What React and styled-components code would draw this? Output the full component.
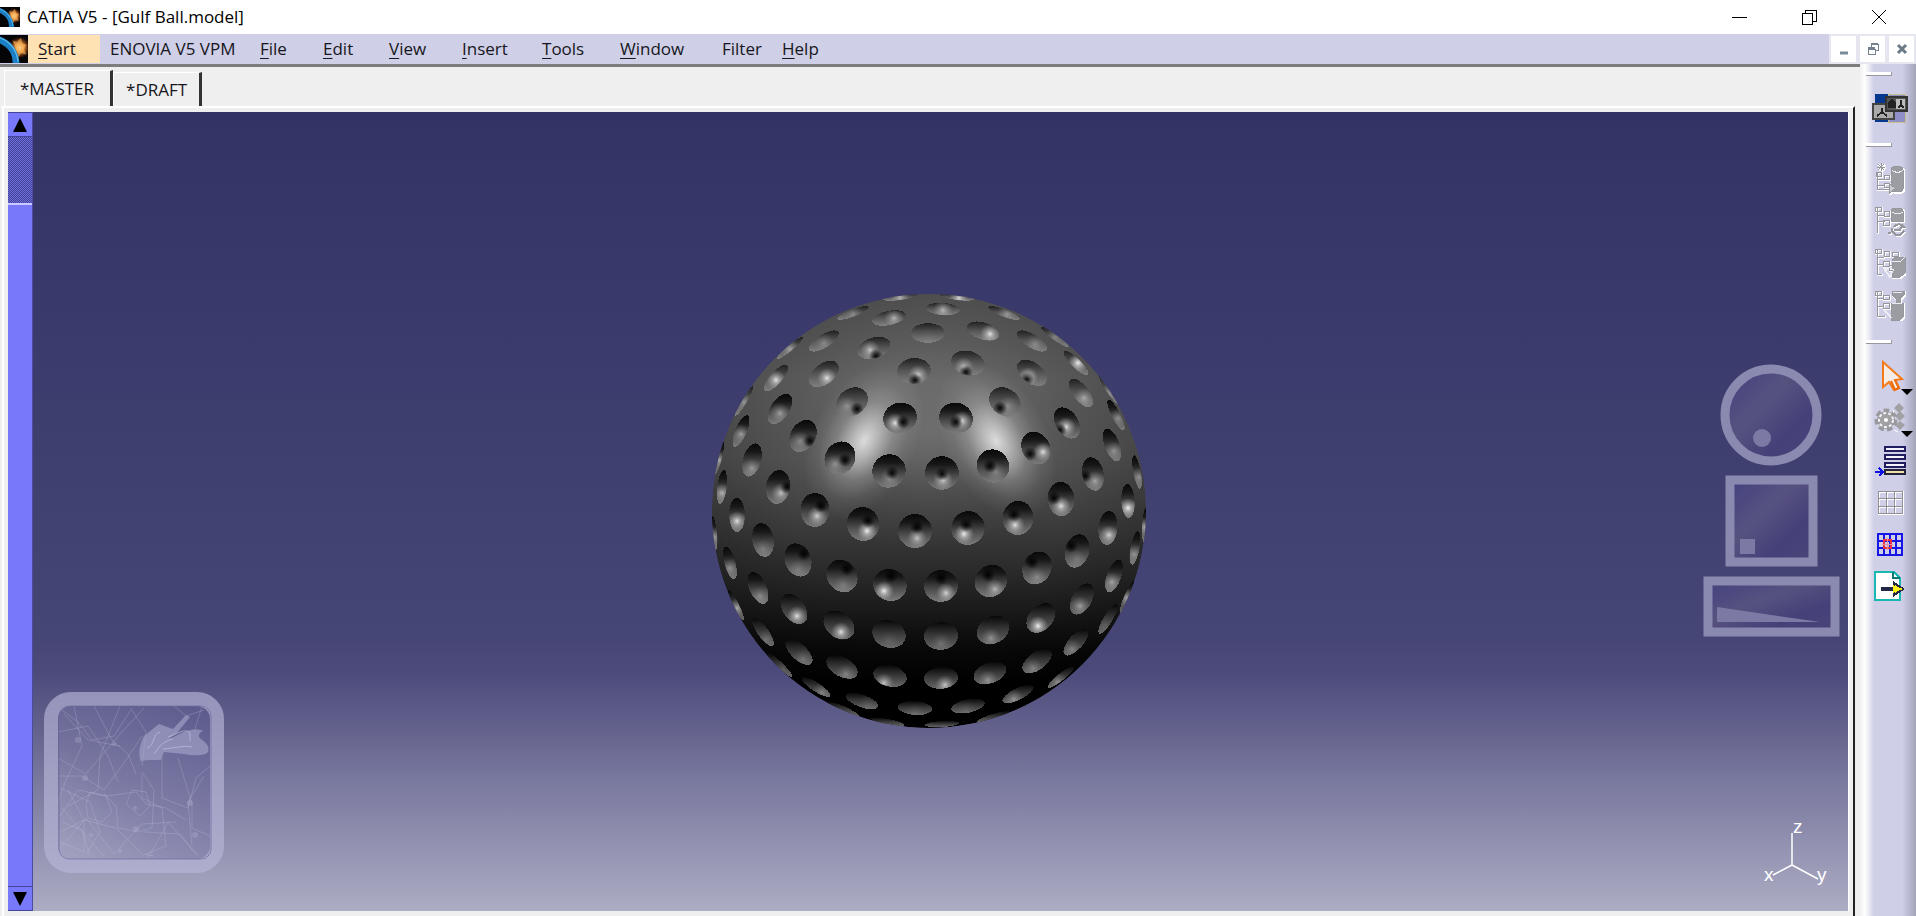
import React from "react";
import styled, { createGlobalStyle } from "styled-components";

const GlobalStyle = createGlobalStyle`
  *, *::before { box-sizing: border-box; }
  body { margin: 0; background: #efefef; }
  body, button { font-family: "Open Sans", "Noto Sans", sans-serif; font-size: 17px; color: #16161c; }
  button { border: 0; padding: 0; background: none; }
  svg { display: block; }
`;

const Page = styled.div`
  min-height: 100vh;
  display: flex;
  flex-direction: column;
`;

const TitleBar = styled.header`
  height: 34px;
  padding-right: 2px;
  display: flex;
  align-items: center;
  background: #fff;
`;

const Title = styled.h1`
  flex: 1;
  margin: 0 0 0 7px;
  font-size: 17px;
  font-weight: 400;
  line-height: 24px;
  color: #000;
`;

const CaptionButton = styled.button`
  width: 70px;
  height: 32px;
  display: grid;
  place-items: center;
`;

const MenuBar = styled.nav`
  height: 30px;
  display: flex;
  align-items: center;
  gap: 0;
  background: #cfcfe7;
`;

const MenuItem = styled.button`
  width: ${(p) => p.$width}px;
  height: 28px;
  padding-left: 10px;
  text-align: left;
  white-space: nowrap;
  line-height: 28px;
  background: ${(p) => (p.$active ? "#fee2b4" : "transparent")};
`;

const Mnemonic = styled.span`
  text-decoration: underline;
  text-underline-offset: 3px;
  text-decoration-thickness: 1px;
`;

const DocumentButtons = styled.div`
  margin-left: auto;
  height: 30px;
  padding: 2px;
  display: flex;
  gap: 4px;
  background: #e6e6f0;
`;

const DocumentButton = styled.button`
  width: 25px;
  height: 26px;
  display: grid;
  place-items: center;
  background: #fff;
`;

const Workspace = styled.div`
  flex: 1;
  display: grid;
  grid-template-columns: minmax(0, 1fr) 56px;
`;

const Main = styled.main`
  display: flex;
  flex-direction: column;
  border-top: 3px solid #7d7d7d;
`;

const Tabs = styled.div`
  height: 39px;
  padding: 3px 0 0 4px;
  display: flex;
`;

const Tab = styled.button`
  height: ${(p) => (p.$active ? 38 : 34)}px;
  margin-top: ${(p) => (p.$active ? 0 : 2)}px;
  padding: ${(p) => (p.$active ? "0 16px 2px 15px" : "0 12px")};
  border-top: 1px solid #fff;
  border-left: 1px solid #fff;
  border-right: 3px solid #333;
  line-height: 32px;
`;

const Panel = styled.section`
  flex: 1;
  display: flex;
  margin: 0 5px 0 2px;
  padding: 4px 4px 5px;
  border-top: 2px solid #fff;
  border-left: 2px solid #fff;
  border-right: 2px solid #222;
`;

const Scrollbar = styled.div`
  width: 25px;
  display: flex;
  flex-direction: column;
  background: #7878fa;
  border-right: 1px solid #4b4ba0;
`;

const ScrollButton = styled.button`
  height: 25px;
  flex: none;
  display: grid;
  place-items: center;
  border-top: 1px solid #44449a;
  border-bottom: 1px solid #44449a;
`;

const ScrollTrack = styled.div`
  height: 66px;
  background: repeating-conic-gradient(#6f6fe4 0 25%, #42428f 0 50%) 0 0 / 2px 2px;
`;

const ScrollThumb = styled.div`
  flex: 1;
  border-top: 2px solid #c9c9ff;
`;

const Viewport = styled.div`
  position: relative;
  flex: 1;
  display: grid;
  place-items: center;
  padding: 0 24px 2px 0;
  border-right: 1px solid #fff;
  background: linear-gradient(#333366 0%, #3d3d6e 38%, #464676 66%, #4c4a7a 70%, #7a799f 84%, #acacc4 100%);
`;

const MaterialPreview = styled.svg`
  position: absolute;
  left: 11px;
  bottom: 38px;
`;

const ViewTools = styled.svg`
  position: absolute;
  right: 8px;
  top: 252px;
`;

const Axes = styled.svg`
  position: absolute;
  right: 16px;
  bottom: 20px;
  font-family: "Liberation Sans", sans-serif;
  font-size: 19px;
`;

const Toolbar = styled.aside`
  padding-top: 8px;
  background: linear-gradient(90deg, #f0f0f2 0, #fff 5px, #cfcfe7 14px, #cfcfe7 42px, #b9b9d2 49px, #a4a4b8 56px);
`;

const ToolGroup = styled.div`
  display: flex;
  flex-direction: column;
  align-items: center;
  margin-bottom: 14px;

  &::before {
    content: "";
    align-self: flex-start;
    width: 26px;
    height: 4px;
    margin: 0 0 11px 6px;
    background: #fff;
    border-right: 1px solid #98989f;
    border-bottom: 1px solid #98989f;
  }
`;

const ToolButton = styled.button`
  position: relative;
  width: 46px;
  height: 42px;
  margin-left: 4px;
  display: grid;
  place-items: center;
`;

const MoreArrow = styled.span`
  position: absolute;
  right: 0;
  bottom: 2px;
  border: 6px solid transparent;
  border-top-color: #000;
  border-bottom: 0;
`;

function Logo({ size, id }) {
  return (
    <svg width={size} height={size} viewBox="0 0 20 20" aria-hidden="true">
      <defs>
        <radialGradient id={id} cx="70%" cy="45%" r="42%">
          <stop offset="0" stopColor="#fff0c0" />
          <stop offset=".35" stopColor="#ee9a40" />
          <stop offset=".7" stopColor="#7a3510" stopOpacity=".7" />
          <stop offset="1" stopColor="#050508" stopOpacity="0" />
        </radialGradient>
      </defs>
      <rect width="20" height="20" fill="#050508" />
      <rect width="20" height="20" fill={`url(#${id})`} />
      <path d="M9 4l3 1 3-3 1 4 3 1-2 3 2 4-4-1-2 3-1-5z" fill="#f6b45c" fillOpacity=".6" />
      <path d="M0 1C8 4 13 10 14 20H9C9 13 6 9 0 6z" fill="#1a7fc4" />
      <path d="M0 2C8 5 12 12 13 19" fill="none" stroke="#5db8e8" />
    </svg>
  );
}

/* Golf ball: centre 217,217, radius 217.
   Each dimple is [x, y, highlight dx, highlight dy, highlight strength, pit dx, pit dy]. */
const DIMPLES = [
  [188, 3, 0, 0, 0.6], [141, 19, 0, 1, 0.3], [177, 24, 5, 0, 0.6], [231, 15, 0, 1, 0.6],
  [112, 47, 0, 2, 0.3], [78, 54, 0, 1, 0.5], [162, 54, -4, 2, 0.7, 2, 8], [216, 39, 0, 6, 0.05],
  [64, 84, 0, 2, 0.9], [112, 80, 3, 4, 0.9], [202, 77, 4, 4, 0.8, 1, 9],
  [32, 107, 0, 1, 0.4], [68, 115, 0, 4, 0.5], [140, 108, -5, 4, 0.35, 5, 7], [188, 124, -5, 5, 0.9, 3, 4],
  [29, 137, 0, 3, 0.5], [91, 142, -3, 5, 0.35, 7, 5], [128, 164, -5, 6, 0.4, 5, 2], [177, 177, 1, 7, 0.35, 3, 2],
  [40, 166, 0, 8, 0.4], [7, 164, 0, 2, 0.6], [66, 193, 3, 6, 0.7, 9, 0], [10, 193, 0, 6, 0.6],
  [103, 216, 2, 6, 0.8, 6, -4], [25, 221, 0, 6, 0.9], [151, 230, 4, 7, 1, 5, -3],
  [203, 237, 2, 7, 0.7, 2, -4], [2, 239, 0, 4, 0.5], [51, 246, 0, 9, 0.2], [86, 266, 0, 9, 0.2, 6, -6],
  [18, 269, 0, 5, 0.4], [130, 282, 1, 9, 0.2, 5, -7], [178, 291, -6, 6, 1, 1, -9],
  [46, 294, 2, 8, 0.3], [82, 315, 3, 7, 0.9], [24, 311, 1, 3, 0.6], [127, 331, 2, 7, 0.9],
  [177, 340, 0, 7, 0.1], [51, 338, 3, 7, 0.2], [87, 358, 4, 7, 0.2], [130, 373, 4, 7, 0.3],
  [178, 382, -6, 7, 0.7], [68, 371, 3, 4, 0.1], [104, 393, 6, 5, 0.3], [150, 407, 6, 4, 0.1],
  [203, 414, 0, 5, 0.1], [131, 415, 0, 0, 0], [176, 428, 0, 0, 0],
  [245, 3, 2, 1, 0.8], [292, 19, 3, 1, 0.4], [271, 37, 7, 3, 0.9], [320, 47, 3, 3, 0.3],
  [343, 43, 0, 0, 0.3], [364, 69, 2, 0, 1], [256, 69, -4, 4, 0.7, -2, 9], [320, 79, -4, 4, 0.9, -5, 6],
  [293, 108, 3, 4, 0.3, -5, 6], [369, 99, 3, 5, 0.5], [397, 96, 2, 2, 0.4], [244, 124, 6, 3, 0.9, 0, 4],
  [355, 129, -1, 4, 0.9, -7, 7], [404, 121, 2, 3, 0.4], [324, 154, 7, 4, 0.9, -6, 6], [281, 172, 3, 6, 0.3, -3, 0],
  [400, 151, 2, 6, 0.4], [230, 179, 1, 7, 0.8, 0, 1], [381, 180, 2, 7, 0.5, -8, 2], [425, 178, 2, 5, 0.4],
  [349, 205, 0, 7, 0.9, -7, -1], [416, 207, 0, 7, 1], [306, 224, -3, 7, 0.9, -4, -3], [256, 234, -4, 6, 1, -2, -3],
  [396, 234, 1, 7, 0.8], [423, 254, -1, 6, 0.4], [433, 231, 0, 2, 0.6], [365, 257, 0, 8, 0.2, -6, -5],
  [325, 274, 0, 9, 0.3, -5, -6], [279, 287, 4, 8, 0.6, -3, -6], [229, 292, 5, 7, 0.8, 0, -8],
  [402, 282, -2, 6, 0.5], [415, 303, 0, 1, 0.6], [370, 305, -2, 7, 0.5], [329, 324, -3, 8, 1],
  [281, 336, -2, 8, 0.4], [229, 342, 0, 7, 0.2], [396, 325, -3, 6, 0.1], [364, 348, -4, 7, 0.3],
  [325, 367, -4, 7, 0.3], [278, 379, -2, 7, 0.4], [229, 384, 4, 7, 0.7], [349, 383, -3, 5, 0.4],
  [306, 400, -4, 5, 0.4], [256, 412, -2, 4, 0.1], [281, 423, 0, 0, 0], [230, 430, 0, 0, 0],
];

const R = 217;

function dimplePath(x, y) {
  const dx = x - R;
  const dy = y - R;
  const d = Math.min(Math.hypot(dx, dy) / R, 0.985);
  const size = 17;
  const narrow = size * Math.sqrt(1 - d * d);
  const angle = Math.atan2(dy, dx);
  const ex = Math.sin(angle) * size;
  const ey = -Math.cos(angle) * size;
  const rotation = (angle * 180) / Math.PI;
  return `M${x + ex} ${y + ey}A${narrow} ${size} ${rotation} 1 1 ${x - ex} ${y - ey}A${narrow} ${size} ${rotation} 1 1 ${x + ex} ${y + ey}Z`;
}

function GolfBall() {
  return (
    <svg width="434" height="434" viewBox="0 0 434 434" role="img" aria-label="Golf ball model">
      <defs>
        <linearGradient id="ball" x1="0" y1="0" x2="0" y2="1">
          <stop offset="0" stopColor="#5e5e5e" />
          <stop offset=".2" stopColor="#646464" />
          <stop offset=".38" stopColor="#545454" />
          <stop offset=".52" stopColor="#3e3e3e" />
          <stop offset=".68" stopColor="#232323" />
          <stop offset=".82" stopColor="#080808" />
          <stop offset=".9" stopColor="#000" />
        </linearGradient>
        <radialGradient id="edge">
          <stop offset=".6" stopColor="#000" stopOpacity="0" />
          <stop offset="1" stopColor="#000" stopOpacity=".18" />
        </radialGradient>
        <radialGradient id="shine">
          <stop offset="0" stopColor="#fff" stopOpacity=".78" />
          <stop offset=".22" stopColor="#fff" stopOpacity=".54" />
          <stop offset=".5" stopColor="#fff" stopOpacity=".22" />
          <stop offset=".75" stopColor="#fff" stopOpacity=".07" />
          <stop offset="1" stopColor="#fff" stopOpacity="0" />
        </radialGradient>
        <linearGradient id="dimpleTop" x1="0" y1="0" x2="0" y2="1">
          <stop offset="0" stopColor="#202020" />
          <stop offset=".45" stopColor="#525252" />
          <stop offset="1" stopColor="#808080" />
        </linearGradient>
        <linearGradient id="dimpleMiddle" x1="0" y1="0" x2="0" y2="1">
          <stop offset="0" stopColor="#080808" />
          <stop offset=".25" stopColor="#181818" />
          <stop offset=".6" stopColor="#4c4c4c" />
          <stop offset="1" stopColor="#7c7c7c" />
        </linearGradient>
        <linearGradient id="dimpleBottom" x1="0" y1="0" x2="0" y2="1">
          <stop offset="0" stopColor="#070707" />
          <stop offset=".45" stopColor="#363636" />
          <stop offset="1" stopColor="#686868" />
        </linearGradient>
        <radialGradient id="glint">
          <stop offset="0" stopColor="#f2f2f2" />
          <stop offset=".35" stopColor="#ccc" stopOpacity=".65" />
          <stop offset="1" stopColor="#aaa" stopOpacity="0" />
        </radialGradient>
        <radialGradient id="pit">
          <stop offset="0" stopColor="#000" stopOpacity=".95" />
          <stop offset=".4" stopColor="#000" stopOpacity=".6" />
          <stop offset="1" stopColor="#000" stopOpacity="0" />
        </radialGradient>
        <clipPath id="ballClip"><circle cx="217" cy="217" r="217" /></clipPath>
        {DIMPLES.map(([x, y], i) => (
          <clipPath id={`dimple${i}`} key={i}><path d={dimplePath(x, y)} /></clipPath>
        ))}
      </defs>
      <g clipPath="url(#ballClip)">
        <circle cx="217" cy="217" r="217" fill="url(#ball)" />
        <circle cx="217" cy="217" r="217" fill="url(#edge)" />
        <ellipse cx="217" cy="140" rx="140" ry="120" fill="url(#shine)" opacity=".16" />
        <ellipse cx="152" cy="147" rx="52" ry="84" fill="url(#shine)" transform="rotate(28 152 147)" />
        <ellipse cx="284" cy="147" rx="52" ry="84" fill="url(#shine)" transform="rotate(-28 284 147)" />
        {DIMPLES.map(([x, y, hx, hy, strength, px, py], i) => (
          <g key={i}>
            <path
              d={dimplePath(x, y)}
              shapeRendering="crispEdges"
              fill={`url(#${y < 110 ? "dimpleTop" : y < 300 ? "dimpleMiddle" : "dimpleBottom"})`}
            />
            <g clipPath={`url(#dimple${i})`}>
              <circle cx={x + hx} cy={y + hy} r="10" fill="url(#glint)" opacity={strength} />
              {px !== undefined && <circle cx={x + px} cy={y + py} r="7" fill="url(#pit)" />}
            </g>
          </g>
        ))}
      </g>
    </svg>
  );
}

const CRACKS = [
  "M18 18l16 12 14 18 22-4 18-28", "M14 40l30-6 20 30 10 26", "M30 14l8 40-16 34-8 22",
  "M50 14l18 34 16 14 8 20", "M76 14l-20 50-2 34-30 16", "M14 84l24 0 22 14 18-24 20-30",
  "M16 124l18-26 28 6 30-4 10 12 20 4 20 12", "M24 98l16 30 0 32-24-10", "M60 102l12 12 2 22 20 4 14-4 2-38-12-18",
  "M16 140l24-12 32 8 26 26 12 2", "M16 156l26-30 28 36 28-30 34-2", "M98 82l0 24 20 10 4 38-20 8",
  "M118 66l0 40 26 10 8-30 14-12", "M134 66l14 46 0 24 18 8", "M160 84l-16 26 4 44", "M100 140l36 2 16 20",
  "M104 166l20-36 30 34", "M14 66l28 16 34-40 24-26", "M42 112l4-12 16 4 6 16-10 10-14-4z",
  "M82 112l6-14 14 2 4 14-10 10z", "M130 14l12 10 18-6", "M158 14l-8 26", "M88 18l14 22-4 34",
  "M16 96l30 14 10 30-14 22", "M20 22l24 26 32 6", "M18 130l20 8 8 26M18 116l24 28 18 20",
];

function Material() {
  return (
    <MaterialPreview width="180" height="181" viewBox="0 0 180 181" aria-hidden="true">
      <defs>
        <linearGradient id="glass" x1="1" y1="0" x2="0" y2="1">
          <stop offset="0" stopColor="#5c5a90" stopOpacity=".6" />
          <stop offset=".6" stopColor="#7f7daa" stopOpacity=".45" />
          <stop offset="1" stopColor="#b0b0cc" stopOpacity=".5" />
        </linearGradient>
      </defs>
      <rect x="15" y="14" width="152" height="153" rx="10" fill="url(#glass)" />
      <g fill="none" stroke="#c5c5e0" strokeOpacity=".26">
        {CRACKS.map((d) => <path d={d} key={d} />)}
      </g>
      <g fill="#c5c5e0" fillOpacity=".25">
        <circle cx="34" cy="48" r="3" /><circle cx="70" cy="52" r="2" /><circle cx="41" cy="86" r="3" />
        <circle cx="91" cy="116" r="2" /><circle cx="47" cy="143" r="2" /><circle cx="92" cy="137" r="3" />
        <circle cx="146" cy="111" r="3" /><circle cx="76" cy="159" r="2" /><circle cx="151" cy="143" r="3" />
      </g>
      <path d="M97 70c-4-9 0-20 3-26l15-12 14 5 13-14 4 2-14 17-7 5c10-4 22-13 34-8-5 2-5 6-2 8 4 3 9 7 7 13-3 4-15 4-24 2l-20-2-3 8-12 0-9 1z" fill="#a9a9cf" fillOpacity=".6" />
      <path d="M103 56c8-2 5-14 13-16M110 62c5-6 6-12 19-15m-10 10c12-1 22-4 29-2m-24-10c10-4 18-9 22-4v8" fill="none" stroke="#c8c8e5" strokeOpacity=".6" />
      <rect x="7" y="7" width="166" height="167" rx="20" fill="none" stroke="#b7b6d8" strokeOpacity=".66" strokeWidth="14" />
      <rect x="15" y="14" width="152" height="153" rx="10" fill="none" stroke="#6d6ba0" strokeOpacity=".7" />
    </MaterialPreview>
  );
}

function ViewControls() {
  return (
    <ViewTools width="137" height="273" viewBox="0 0 137 273" aria-hidden="true">
      <defs>
        <linearGradient id="sheen" x1="0" y1="0" x2="1" y2="1">
          <stop offset="0" stopColor="#444080" />
          <stop offset=".4" stopColor="#56527f" />
          <stop offset=".7" stopColor="#454078" />
          <stop offset="1" stopColor="#49467a" />
        </linearGradient>
      </defs>
      <g fill="url(#sheen)" stroke="#8a89b0" strokeWidth="9">
        <circle cx="68" cy="51" r="46" />
        <rect x="27" y="116" width="83" height="82" />
        <rect x="5" y="217" width="127" height="51" />
      </g>
      <g fill="#7c7aa4">
        <circle cx="59" cy="74" r="9" />
        <rect x="37" y="175" width="15" height="15" />
        <path d="M14 243v15h103z" />
      </g>
    </ViewTools>
  );
}

function AxisTriad() {
  return (
    <Axes width="70" height="76" viewBox="0 0 70 76" role="img" aria-label="Axis directions">
      <path d="M30 18V50L11 60M30 50L56 64" fill="none" stroke="#fff" strokeWidth="1.5" />
      <g fill="#fff">
        <text x="31" y="18">z</text>
        <text x="2" y="66">x</text>
        <text x="55" y="66">y</text>
      </g>
    </Axes>
  );
}

const svgProps = { width: 32, height: 32, viewBox: "0 0 32 32", shapeRendering: "crispEdges", "aria-hidden": true };

function WindowsIcon() {
  return (
    <svg {...svgProps} width="38" viewBox="-3 0 38 32">
      <path d="M1 2h13v28H1z" fill="#06388f" />
      <path d="M14 2h17v28H14z" fill="#918fc8" stroke="#c9c08d" />
      <path d="M-1 12h21v15H-1z" fill="#aaa" stroke="#444" strokeWidth="2" />
      <path d="M12 5h21v14H12z" fill="#555" stroke="#333" strokeWidth="2" />
      <path d="M22 7h9v10h-9z" fill="#bbb" />
      <path d="M8 16v4l-5 4m5-4l5 4M27 8v5l-3 3m3-3l3 3" fill="none" stroke="#222" strokeWidth="2" />
      <path d="M14 10l4-3 4 3v6h-8z" fill="#222" />
    </svg>
  );
}

const TREE_SHAPES = {
  create: (
    <>
      <path d="M7 0v8M3 4h8M4 1l6 6M10 1L4 7" />
      <path d="M3 9v17h13M3 16h8M3 22h7M2 9h5v4H2zM10 12h5v4h-5zM10 20h5v4h-5z" />
      <path d="M17 7c0-5 12-5 12 0v19c0 4-12 4-12 0z" fill="#9c9ca3" />
      <path d="M18 7c2 3 9 3 11 0" stroke="#ececf2" />
      <path d="M15 21v10l7-6z" fill="#c9c9d4" />
    </>
  ),
  update: (
    <>
      <path d="M3 2v26M3 10h8M3 16h8M1 2h6v4H1zM10 6h5v5h-5zM9 15h6v5H9z" />
      <path d="M17 6c0-4 12-4 12 0v10H17z" fill="#9c9ca3" />
      <path d="M18 7c2 2 9 2 11 0" stroke="#ececf2" />
      <path d="M20 22c3-4 8-3 10 0-2 0-4 0-4 3h-6M18 23v3l4 4h4l4-4M14 28h3" strokeWidth="2" />
    </>
  ),
  link: (
    <>
      <path d="M3 2v25h5M3 10h7M3 17h7M1 2h6v4H1zM10 4h5v5h-5zM18 5h6v4h-6zM9 14h6v5H9zM15 18h5v5h-5z" />
      <path d="M18 13l3-3h10v16l-5 4H18z" fill="#9c9ca3" />
      <path d="M18 14h9l4-4M10 22l5 7 5-6-5-3z" stroke="#ececf2" />
    </>
  ),
  filter: (
    <>
      <path d="M3 2v25h8M3 9h7M3 17h7M1 2h6v4H1zM9 6h6v4H9zM9 14h6v5H9z" />
      <path d="M18 2h12v4l-4 4v4h3v14l-3 3h-9V14h5v-4l-4-4z" fill="#9c9ca3" />
      <path d="M19 3h9M18 14h10M10 21l8 8" stroke="#ececf2" />
    </>
  ),
};

function TreeIcon({ kind }) {
  return (
    <svg {...svgProps} fill="none">
      <g stroke="#fff" strokeWidth="2" transform="translate(1 1)">{TREE_SHAPES[kind]}</g>
      <g stroke="#96969d">{TREE_SHAPES[kind]}</g>
    </svg>
  );
}

function CursorIcon() {
  return (
    <svg {...svgProps} shapeRendering="auto">
      <path d="M9 2v25l6-5 5 8 5-2-4-8 7-1z" fill="#f5ece8" stroke="#f47a18" strokeWidth="2" />
      <path d="M17 21l4 9 4-2-4-8" fill="none" stroke="#ef6b0a" strokeWidth="2" />
    </svg>
  );
}

function GearIcon() {
  return (
    <svg {...svgProps} shapeRendering="auto" fill="#a0a0a5">
      <path d="M25 1l5 5-5 5-5-5zM26 9l5 5-5 5-5-5zM26 19l5 4-5 5-5-5z" />
      <circle cx="12" cy="18" r="9" stroke="#98989d" strokeWidth="5" strokeDasharray="5 3" />
      <circle cx="12" cy="18" r="7" fill="none" stroke="#f4f4f8" strokeWidth="2" strokeDasharray="3 2" />
      <circle cx="12" cy="18" r="2" fill="#fff" />
      <path d="M20 28l4 2M20 11l-1-3" stroke="#fff" />
    </svg>
  );
}

function ListIcon() {
  return (
    <svg {...svgProps}>
      <g fill="#f3f3fa" stroke="#211d62" strokeWidth="2">
        <path d="M11 3h20v4H11zM11 11h20v4H11zM11 19h20v4H11z" />
        <path d="M11 26h20v4H11z" fill="#eee0a7" stroke="#222238" />
      </g>
      <path d="M1 28h8M5 24l4 4-4 4" fill="none" stroke="#1010e0" strokeWidth="2" />
    </svg>
  );
}

function GridIcon({ active }) {
  return active ? (
    <svg {...svgProps} fill="none" strokeWidth="2">
      <path d="M4 6h24v21H4zM10 6v21M16 6v21M22 6v21M4 13h24M4 20h24" stroke="#1515e5" />
      <path d="M10 12h7v8h-7z" stroke="#f03042" />
      <path d="M13 10v12M8 16h11" stroke="#e4929f" strokeWidth="1" />
    </svg>
  ) : (
    <svg {...svgProps} fill="none">
      <path d="M5 6h24v22H5zM13 6v22M21 6v22M5 13h24M5 21h24" stroke="#fff" strokeWidth="2" />
      <path d="M4 5h24v22H4zM12 5v22M20 5v22M4 12h24M4 20h24" stroke="#909096" />
    </svg>
  );
}

function ExportIcon() {
  return (
    <svg {...svgProps}>
      <path d="M1 2h19l6 6v22H1z" fill="#fff" stroke="#16b8b1" strokeWidth="2" />
      <path d="M19 2v6h7" fill="none" stroke="#107b7b" strokeWidth="2" />
      <path d="M7 19h13v-6l9 6-9 6v-6" fill="#f6ec22" stroke="#222744" strokeWidth="2" />
      <path d="M7 19h14" stroke="#222744" strokeWidth="4" />
      <path d="M19 15l10 4-10 4z" fill="#fbf215" />
    </svg>
  );
}

const MENUS = [
  { label: "Start", width: 72, active: true },
  { label: "ENOVIA V5 VPM", width: 150, plain: true },
  { label: "File", width: 63 },
  { label: "Edit", width: 66 },
  { label: "View", width: 73 },
  { label: "Insert", width: 80 },
  { label: "Tools", width: 78 },
  { label: "Window", width: 102 },
  { label: "Filter", width: 60, plain: true },
  { label: "Help", width: 60 },
];

export default function App() {
  return (
    <Page>
      <GlobalStyle />
      <TitleBar>
        <Logo size={20} id="logoSmall" />
        <Title>CATIA V5 - [Gulf Ball.model]</Title>
        <CaptionButton aria-label="Minimize">
          <svg width="16" height="16" shapeRendering="crispEdges"><path d="M1 8h15" stroke="#000" /></svg>
        </CaptionButton>
        <CaptionButton aria-label="Restore">
          <svg width="16" height="16" fill="none" stroke="#000" shapeRendering="crispEdges">
            <path d="M1 4h10v11H1zM4 4V1h11v11h-4" />
          </svg>
        </CaptionButton>
        <CaptionButton aria-label="Close">
          <svg width="16" height="16"><path d="M1 1l14 14M15 1L1 15" stroke="#000" /></svg>
        </CaptionButton>
      </TitleBar>

      <MenuBar aria-label="Main menu">
        <Logo size={28} id="logoMenu" />
        {MENUS.map(({ label, width, active, plain }) => (
          <MenuItem key={label} $width={width} $active={active}>
            {plain ? label : <><Mnemonic>{label[0]}</Mnemonic>{label.slice(1)}</>}
          </MenuItem>
        ))}
        <DocumentButtons>
          <DocumentButton aria-label="Minimize document">
            <svg width="14" height="14"><path d="M3 11h8" stroke="#7b8a99" strokeWidth="3" /></svg>
          </DocumentButton>
          <DocumentButton aria-label="Restore document">
            <svg width="14" height="14" fill="none" stroke="#75818f" shapeRendering="crispEdges">
              <path d="M2 7h7v5H2zM5 5V2h7v6h-2" /><path d="M2 6h7M5 2h7" strokeWidth="2" />
            </svg>
          </DocumentButton>
          <DocumentButton aria-label="Close document">
            <svg width="14" height="14"><path d="M3 3l8 8M11 3l-8 8" stroke="#6c7987" strokeWidth="3" /></svg>
          </DocumentButton>
        </DocumentButtons>
      </MenuBar>

      <Workspace>
        <Main>
          <Tabs role="tablist">
            <Tab role="tab" aria-selected="true" $active>*MASTER</Tab>
            <Tab role="tab" aria-selected="false">*DRAFT</Tab>
          </Tabs>
          <Panel>
            <Scrollbar>
              <ScrollButton aria-label="Scroll up">
                <svg width="14" height="14"><path d="M7 0l7 14H0z" /></svg>
              </ScrollButton>
              <ScrollTrack />
              <ScrollThumb />
              <ScrollButton aria-label="Scroll down">
                <svg width="14" height="14"><path d="M0 0h14L7 14z" /></svg>
              </ScrollButton>
            </Scrollbar>
            <Viewport>
              <GolfBall />
              <Material />
              <ViewControls />
              <AxisTriad />
            </Viewport>
          </Panel>
        </Main>

        <Toolbar aria-label="Tools">
          <ToolGroup>
            <ToolButton aria-label="Windows"><WindowsIcon /></ToolButton>
          </ToolGroup>
          <ToolGroup>
            {Object.keys(TREE_SHAPES).map((kind) => (
              <ToolButton key={kind} aria-label={kind} disabled><TreeIcon kind={kind} /></ToolButton>
            ))}
          </ToolGroup>
          <ToolGroup>
            <ToolButton aria-label="Select"><CursorIcon /><MoreArrow /></ToolButton>
            <ToolButton aria-label="Settings"><GearIcon /><MoreArrow /></ToolButton>
            <ToolButton aria-label="List"><ListIcon /></ToolButton>
            <ToolButton aria-label="Grid" disabled><GridIcon /></ToolButton>
            <ToolButton aria-label="Work on support"><GridIcon active /></ToolButton>
            <ToolButton aria-label="Export"><ExportIcon /></ToolButton>
          </ToolGroup>
        </Toolbar>
      </Workspace>
    </Page>
  );
}
